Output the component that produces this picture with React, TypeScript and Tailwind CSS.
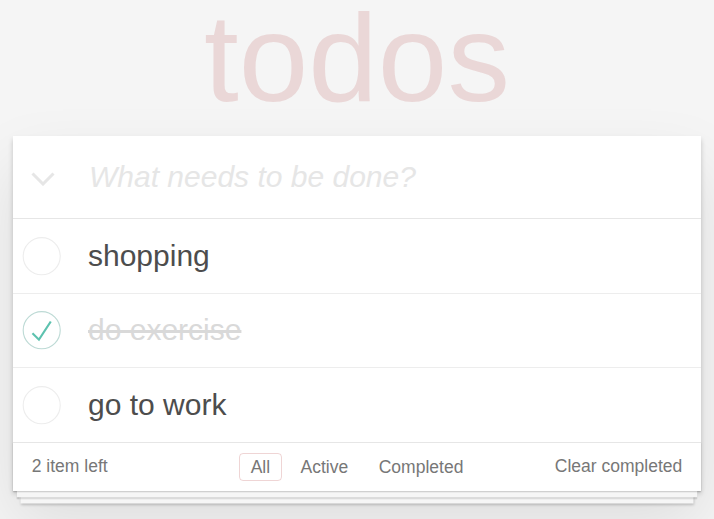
import { useState } from "react";

type Todo = { id: number; title: string; done: boolean };

const INITIAL: Todo[] = [
  { id: 1, title: "shopping", done: false },
  { id: 2, title: "do exercise", done: true },
  { id: 3, title: "go to work", done: false },
];

const FILTERS = ["All", "Active", "Completed"];

function Toggle({ checked }: { checked: boolean }) {
  return (
    <svg
      viewBox="-10 -18 100 135"
      className="h-[50px] w-[50px] shrink-0"
      xmlns="http://www.w3.org/2000/svg"
    >
      <circle
        cx={50}
        cy={50}
        r={50}
        fill="none"
        stroke={checked ? "#bddad5" : "#ededed"}
        strokeWidth={3}
      />
      {checked && (
        <path fill="#5dc2af" d="M72 25L42 71 27 56l-4 4 20 20 34-52z" />
      )}
    </svg>
  );
}

export default function App() {
  const [todos, setTodos] = useState<Todo[]>(INITIAL);
  const [filter, setFilter] = useState("All");

  const left = todos.filter((t) => !t.done).length;
  const visible = todos.filter((t) =>
    filter === "All" ? true : filter === "Active" ? !t.done : t.done,
  );

  return (
    <div className="min-h-screen bg-[#f5f5f5] font-['Liberation_Sans',Arial,sans-serif] text-[#4d4d4d]">
      {/* Title */}
      <div className="flex h-[136px] items-start justify-center">
        <h1 className="pt-[12px] text-center text-[125px] leading-[92px] font-thin text-[rgba(175,47,47,0.15)]">
          todos
        </h1>
      </div>

      <section className="mx-auto w-[688px] bg-white shadow-[0_2.5px_5px_rgba(0,0,0,0.2),0_31.25px_62.5px_rgba(0,0,0,0.1)]">
        {/* New todo */}
        <div className="flex h-[82px] items-center">
          <div className="flex w-[60px] shrink-0 justify-center pt-[3px]">
            <svg viewBox="0 0 24 14" className="h-[14px] w-[24px]">
              <polyline
                points="1.5,1.5 12,12 22.5,1.5"
                fill="none"
                stroke="#e6e6e6"
                strokeWidth={3}
              />
            </svg>
          </div>
          <input
            className="flex-1 bg-transparent pl-[16px] pr-[20px] text-[30px] leading-[42px] outline-none placeholder:italic placeholder:text-[#e6e6e6]"
            placeholder="What needs to be done?"
          />
        </div>

        {/* List */}
        <ul className="border-t border-[#e6e6e6]">
          {visible.map((t) => (
            <li
              key={t.id}
              className="flex items-center border-b border-[#ededed] last:border-b-0"
              onClick={() =>
                setTodos((p) =>
                  p.map((x) => (x.id === t.id ? { ...x, done: !x.done } : x)),
                )
              }
            >
              <Toggle checked={t.done} />
              <label
                className={`py-[18.75px] pl-[25px] pr-[18.75px] text-[30px] leading-[36px] ${t.done ? "text-[#d9d9d9] line-through" : "text-[#4d4d4d]"}`}
              >
                {t.title}
              </label>
            </li>
          ))}
        </ul>

        {/* Footer */}
        <footer className="grid grid-cols-[1fr_auto_1fr] items-center border-t border-[#e6e6e6] px-[18.75px] py-[10px] text-[17.5px] leading-[25px] text-[#777] shadow-[0_1.25px_1.25px_rgba(0,0,0,0.2),0_10px_0_-3.75px_#f6f6f6,0_11.25px_1.25px_-3.75px_rgba(0,0,0,0.2),0_20px_0_-7.5px_#f6f6f6,0_21.25px_2.5px_-7.5px_rgba(0,0,0,0.2)]">
          <span>{left} item left</span>
          <ul className="flex">
            {FILTERS.map((f) => (
              <li key={f} className="mx-[3.75px]">
                <button
                  type="button"
                  onClick={() => setFilter(f)}
                  className={`rounded-[4px] border px-[10.5px] leading-[26px] ${filter === f ? "border-[rgba(175,47,47,0.2)]" : "border-transparent"}`}
                >
                  {f}
                </button>
              </li>
            ))}
          </ul>
          <button
            type="button"
            className="justify-self-end"
            onClick={() => setTodos((p) => p.filter((x) => !x.done))}
          >
            Clear completed
          </button>
        </footer>
      </section>
    </div>
  );
}
